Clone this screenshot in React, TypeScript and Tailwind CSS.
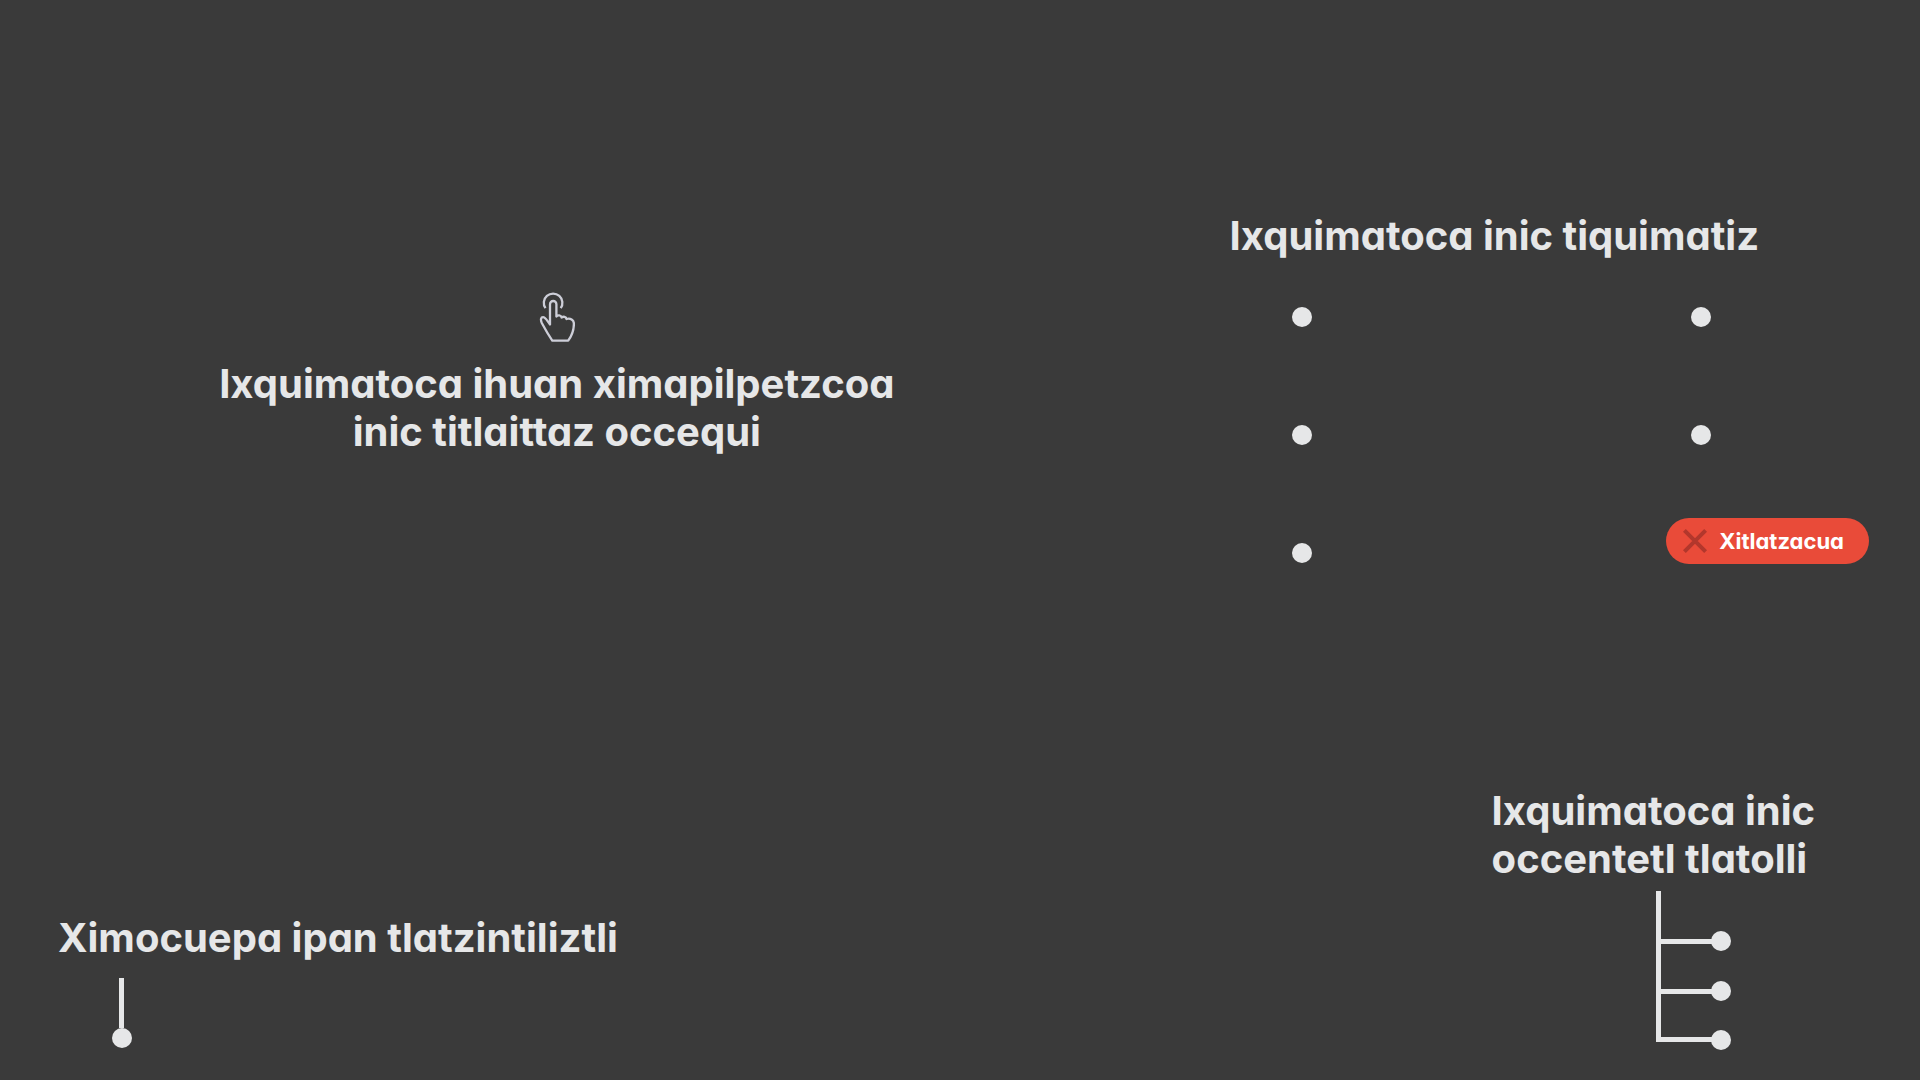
import React from "react";

function Dot({ className = "" }: { className?: string }) {
  return <span className={`block size-5 shrink-0 rounded-full bg-[#e6e7e8] ${className}`} />;
}

function TapIcon() {
  return (
    <svg
      className="h-[50px] w-9"
      viewBox="0 0 36 50"
      fill="none"
      stroke="#cdced8"
      strokeWidth="2.3"
      strokeLinejoin="round"
      strokeLinecap="butt"
      aria-hidden="true"
    >
      <path d="M6.500 16.200A9.300 9.300 0 1 1 21.700 16.200" />
      <path d="M11 32.500V12.200a3.200 3.200 0 0 1 6.400 0V24.500c1.200-1.600 4.600-1.500 5.200 1 1.800-1.300 4.400-.9 4.900 1.500 3.800-1.100 7.400.8 7.400 4.700 0 6-1.800 11.500-5.700 17H13.300C9.800 43.500 6.300 37.500 2.800 31 1.300 27.500 2 25.200 4 25.200 6.800 25.200 8.400 29.500 11 32.500Z" />
    </svg>
  );
}

function CloseButton() {
  return (
    <button
      type="button"
      className="flex h-[46px] min-w-[203px] items-center rounded-full bg-[#e94b39] pr-3 pl-[17px] text-[22px] font-bold text-white"
    >
      <svg className="size-6" viewBox="0 0 24 24" stroke="#b2372c" strokeWidth="4" aria-hidden="true">
        <path d="M1.400 1.400 22.600 22.600M22.600 1.400 1.400 22.600" />
      </svg>
      <span className="flex-1 text-center">Xitlatzacua</span>
    </button>
  );
}

function Branch({ className = "", bar = "mt-px" }: { className?: string; bar?: string }) {
  return (
    <li className={`flex h-5 items-center ${className}`}>
      <span className={`h-[5px] w-[51px] bg-[#e6e7e8] ${bar}`} />
      <Dot className="-ml-px" />
    </li>
  );
}

export default function App() {
  return (
    <main className="flex min-h-screen bg-[#3a3a3a] font-['Inter',sans-serif] text-[40px] leading-[48px] font-bold text-[#e6e7e8] [font-feature-settings:'cv11','calt'_0] [font-variant-ligatures:none]">
      <div className="flex w-[58%] flex-col justify-between pt-[292px] pb-8">
        <section className="flex flex-col items-center gap-[18px] text-center">
          <TapIcon />
          <p>
            Ixquimatoca ihuan ximapilpetzcoa
            <br />
            inic titlaittaz occequi
          </p>
        </section>
        <section className="pl-[58px]">
          <p>Ximocuepa ipan tlatzintiliztli</p>
          <div className="mt-4 ml-[54px] flex w-5 flex-col">
            <span className="ml-[7px] h-[50px] w-[5px] bg-[#e6e7e8]" />
            <Dot />
          </div>
        </section>
      </div>

      <div className="flex flex-1 flex-col justify-between pt-[212px] pb-[30px]">
        <section>
          <p className="ml-[116px]">Ixquimatoca inic tiquimatiz</p>
          <div className="mt-[47px] ml-[178px] grid grid-cols-[374px_auto] items-end justify-start">
            <Dot className="mb-[98px]" />
            <Dot className="mb-[98px] ml-[25px]" />
            <Dot className="mb-[73px]" />
            <Dot className="mb-[73px] ml-[25px]" />
            <Dot className="mb-px" />
            <CloseButton />
          </div>
        </section>
        <section className="ml-[378px]">
          <p>
            Ixquimatoca inic
            <br />
            occentetl tlatolli
          </p>
          <div className="mt-2 ml-[164px] flex items-start">
            <span className="h-[151px] w-[5px] bg-[#e6e7e8]" />
            <ul className="flex flex-col pt-10">
              <Branch className="mb-[30px]" />
              <Branch className="mb-[29px]" />
              <Branch bar="mb-px" />
            </ul>
          </div>
        </section>
      </div>
    </main>
  );
}
